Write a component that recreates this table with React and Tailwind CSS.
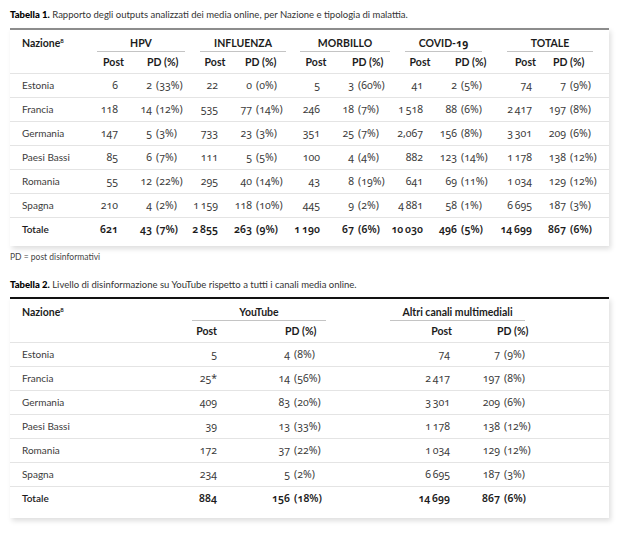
import React from 'react';

const NUM = "font-['Noto_Sans',sans-serif] oldstyle-nums whitespace-nowrap text-[10.5px]";

const t1Groups = [
    { name: 'HPV', line: 'w-[88px]', pd: 'pl-[17px]' },
    { name: 'INFLUENZA', line: 'w-[86px]', pd: 'pl-[15px]' },
    { name: 'MORBILLO', line: 'w-[90px]', pd: 'pl-[20px]' },
    { name: 'COVID-19', line: 'w-[77px]', pd: 'pl-[20px]' },
    { name: 'TOTALE', line: 'w-[86px]', pd: 'pl-[9px]' },
];

// thousands separated by a thin space
const t1Rows = [
    ['Estonia', '6', '2', '33', '22', '0', '0', '5', '3', '60', '41', '2', '5', '74', '7', '9'],
    ['Francia', '118', '14', '12', '535', '77', '14', '246', '18', '7', '1\u2009518', '88', '6', '2\u2009417', '197', '8'],
    ['Germania', '147', '5', '3', '733', '23', '3', '351', '25', '7', '2,067', '156', '8', '3\u2009301', '209', '6'],
    ['Paesi Bassi', '85', '6', '7', '111', '5', '5', '100', '4', '4', '882', '123', '14', '1\u2009178', '138', '12'],
    ['Romania', '55', '12', '22', '295', '40', '14', '43', '8', '19', '641', '69', '11', '1\u2009034', '129', '12'],
    ['Spagna', '210', '4', '2', '1\u2009159', '118', '10', '445', '9', '2', '4\u2009881', '58', '1', '6\u2009695', '187', '3'],
];
const t1Total = ['Totale', '621', '43', '7', '2\u2009855', '263', '9', '1\u2009190', '67', '6', '10\u2009030', '496', '5', '14\u2009699', '867', '6'];

const t2Rows = [
    ['Estonia', '5', '4', '8', '74', '7', '9'],
    ['Francia', '25*', '14', '56', '2\u2009417', '197', '8'],
    ['Germania', '409', '83', '20', '3\u2009301', '209', '6'],
    ['Paesi Bassi', '39', '13', '33', '1\u2009178', '138', '12'],
    ['Romania', '172', '37', '22', '1\u2009034', '129', '12'],
    ['Spagna', '234', '5', '2', '6\u2009695', '187', '3'],
];
const t2Total = ['Totale', '884', '156', '18', '14\u2009699', '867', '6'];

const T1_COLS = 'grid grid-cols-[87px_33px_70px_30px_70px_32px_73px_30px_72px_37px_55px]';
const T2_COLS = 'grid grid-cols-[182px_38px_160px_73px_136px]';

const Pd = ({ n, p, box }) => (
    <div className="flex items-center">
        <span className={`${box} flex justify-end ${NUM}`}>{n}</span>
        <span className={`ml-[4px] ${NUM}`}>({p}%)</span>
    </div>
);

const PostCell = ({ v, pr }) => (
    <div className={`flex justify-end ${pr} ${NUM}`}>{v}</div>
);

const Table1Row = ({ r, bold }) => (
    <div className={`${T1_COLS} h-[24px] items-center border-t border-[#e4e4e4] ${bold ? 'font-semibold text-[#1c1c1c]' : ''}`}>
        <div className="pl-[12px]">{r[0]}</div>
        {[0, 1, 2, 3, 4].map((g) => (
            <React.Fragment key={g}>
                <PostCell v={r[1 + g * 3]} pr="pr-[12px]" />
                <Pd n={r[2 + g * 3]} p={r[3 + g * 3]} box="w-[22px]" />
            </React.Fragment>
        ))}
    </div>
);

const Table2Row = ({ r, bold }) => (
    <div className={`${T2_COLS} h-[24px] items-center border-t border-[#e4e4e4] ${bold ? 'font-semibold text-[#1c1c1c]' : ''}`}>
        <div className="pl-[12px]">{r[0]}</div>
        <PostCell v={r[1]} pr="pr-[13px]" />
        <Pd n={r[2]} p={r[3]} box="w-[60px]" />
        <PostCell v={r[4]} pr="pr-[13px]" />
        <Pd n={r[5]} p={r[6]} box="w-[37px]" />
    </div>
);

const Nazione = () => (
    <div className="pl-[12px] pb-[2px] leading-[14px] font-bold text-[#1c1c1c] text-[10.5px]">
        Nazione<sup className="text-[6px] -top-[4px]">8</sup>
    </div>
);

const App = () => {
    return (
        <div className="min-h-[536px] bg-white px-[10px] pt-[9px] font-['Lato',sans-serif] text-[10px] text-[#3b3b3b]">
            <p className="leading-[12px] text-[9.5px] text-[#333]">
                <span className="font-black text-black">Tabella 1.</span> Rapporto degli outputs analizzati dei media online, per Nazione e tipologia di malattia.
            </p>

            <div className="mt-[7px] border-t-2 border-[#8c8c8c] bg-white pb-[5px] shadow-[2px_3px_5px_rgba(0,0,0,0.13)]">
                <div className={`${T1_COLS} h-[22px] items-end`}>
                    <Nazione />
                    {t1Groups.map((g) => (
                        <div key={g.name} className="col-span-2">
                            <div className={`${g.line} border-b border-[#c4c4c4] pb-[1px] text-center leading-[14px] font-bold text-[10.5px] text-[#1c1c1c] whitespace-nowrap`}>
                                {g.name === 'COVID-19' ? <>COVID-<span className="font-['Noto_Sans',sans-serif] oldstyle-nums">19</span></> : g.name}
                            </div>
                        </div>
                    ))}
                </div>
                <div className={`${T1_COLS} h-[21px] items-center font-bold text-[10.5px] text-[#1c1c1c]`}>
                    <div />
                    {t1Groups.map((g) => (
                        <React.Fragment key={g.name}>
                            <div className="text-center">Post</div>
                            <div className={`${g.pd} whitespace-nowrap`}>PD (%)</div>
                        </React.Fragment>
                    ))}
                </div>
                {t1Rows.map((r) => (
                    <Table1Row key={r[0]} r={r} />
                ))}
                <Table1Row r={t1Total} bold />
            </div>

            <p className="mt-[5px] leading-[12px] text-[8.5px] text-[#444]">PD = post disinformativi</p>

            <p className="mt-[16px] leading-[12px] text-[9.5px] text-[#333]">
                <span className="font-black text-black">Tabella 2.</span> Livello di disinformazione su YouTube rispetto a tutti i canali media online.
            </p>

            <div className="mt-[6px] border-t-2 border-[#111] bg-white pb-[8px] shadow-[2px_3px_5px_rgba(0,0,0,0.13)]">
                <div className={`${T2_COLS} h-[22px] items-end`}>
                    <Nazione />
                    <div className="col-span-2">
                        <div className="w-[134px] border-b border-[#c4c4c4] pb-[1px] text-center leading-[14px] font-bold text-[10.5px] text-[#1c1c1c]">YouTube</div>
                    </div>
                    <div className="col-span-2">
                        <div className="w-[135px] border-b border-[#c4c4c4] pb-[1px] text-center leading-[14px] font-bold text-[10.5px] text-[#1c1c1c] whitespace-nowrap">Altri canali multimediali</div>
                    </div>
                </div>
                <div className={`${T2_COLS} h-[21px] items-center font-bold text-[10.5px] text-[#1c1c1c]`}>
                    <div />
                    <div className="pr-[13px] text-right">Post</div>
                    <div className="pl-[55px] whitespace-nowrap">PD (%)</div>
                    <div className="pr-[11px] text-right">Post</div>
                    <div className="pl-[34px] whitespace-nowrap">PD (%)</div>
                </div>
                {t2Rows.map((r) => (
                    <Table2Row key={r[0]} r={r} />
                ))}
                <Table2Row r={t2Total} bold />
            </div>
        </div>
    );
};

export default App;
